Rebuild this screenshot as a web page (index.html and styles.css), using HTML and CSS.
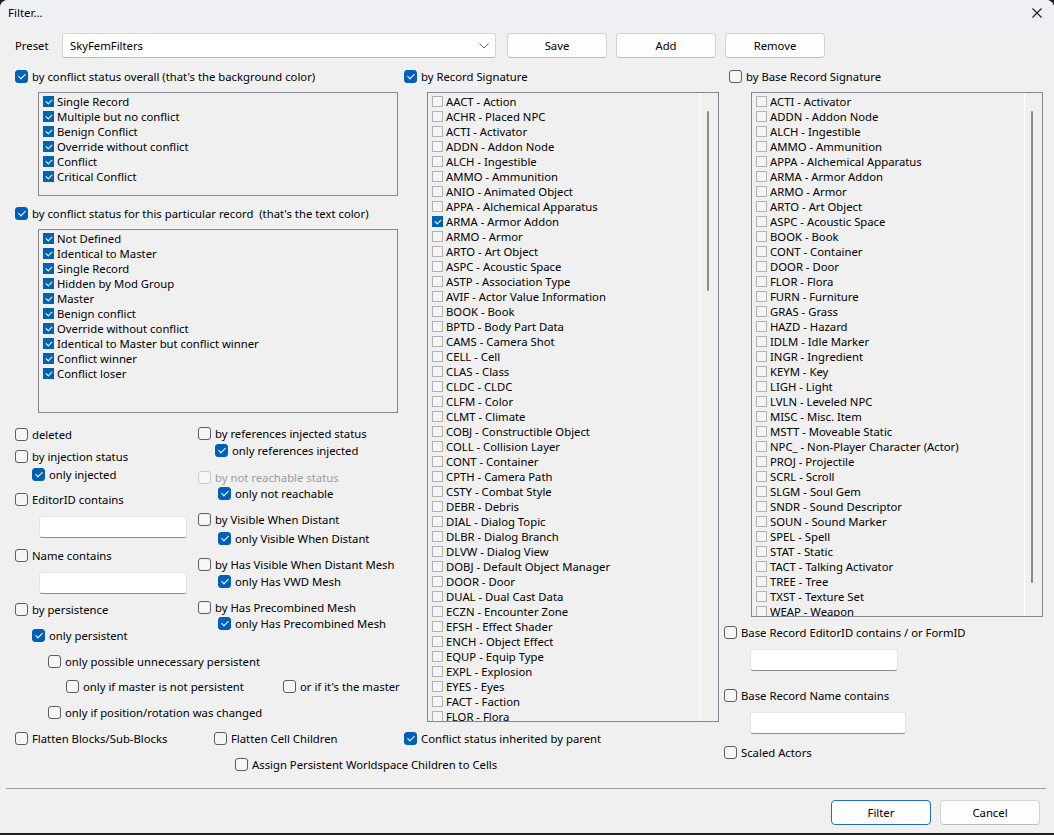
FILE: index.html
```html
<!DOCTYPE html>
<html>
<head>
  <meta charset="utf-8">
  <link rel="stylesheet" href="styles.css">
  <title>Filter...</title>
</head>
<body>
<div class="window">
  <div class="titlebar">
    <span class="title">Filter...</span>
    <span class="close">
      <svg width="10" height="10" viewBox="0 0 10 10"><path d="M0.5 0.5 L9.5 9.5 M9.5 0.5 L0.5 9.5" stroke="#1b1b1b" stroke-width="1.1" fill="none"/></svg>
    </span>
  </div>

  <div class="content">
    <div class="toprow">
      <span class="preset-label">Preset</span>
      <div class="combo">
        <span>SkyFemFilters</span>
        <svg width="10" height="6" viewBox="0 0 10 6"><path d="M0.5 0.5 L5 5 L9.5 0.5" stroke="#5f5f5f" stroke-width="1" fill="none"/></svg>
      </div>
      <button class="btn save">Save</button>
      <button class="btn">Add</button>
      <button class="btn">Remove</button>
    </div>

    <div class="main">
      <!-- column 1: conflict status + misc options -->
      <div class="col">
        <label class="cb"><span class="box on"></span>by conflict status overall (that's the background color)</label>
        <div class="listbox status-list">
          <div class="items">
            <div class="item"><span class="ibox on"></span>Single Record</div>
            <div class="item"><span class="ibox on"></span>Multiple but no conflict</div>
            <div class="item"><span class="ibox on"></span>Benign Conflict</div>
            <div class="item"><span class="ibox on"></span>Override without conflict</div>
            <div class="item"><span class="ibox on"></span>Conflict</div>
            <div class="item"><span class="ibox on"></span>Critical Conflict</div>
          </div>
        </div>

        <label class="cb mt9"><span class="box on"></span>by conflict status for this particular record &nbsp;(that's the text color)</label>
        <div class="listbox status-list tall">
          <div class="items">
            <div class="item"><span class="ibox on"></span>Not Defined</div>
            <div class="item"><span class="ibox on"></span>Identical to Master</div>
            <div class="item"><span class="ibox on"></span>Single Record</div>
            <div class="item"><span class="ibox on"></span>Hidden by Mod Group</div>
            <div class="item"><span class="ibox on"></span>Master</div>
            <div class="item"><span class="ibox on"></span>Benign conflict</div>
            <div class="item"><span class="ibox on"></span>Override without conflict</div>
            <div class="item"><span class="ibox on"></span>Identical to Master but conflict winner</div>
            <div class="item"><span class="ibox on"></span>Conflict winner</div>
            <div class="item"><span class="ibox on"></span>Conflict loser</div>
          </div>
        </div>

        <div class="lower">
          <div class="left-sub">
            <label class="cb"><span class="box"></span>deleted</label>
            <label class="cb mt6"><span class="box"></span>by injection status</label>
            <label class="cb mt2 ind17"><span class="box on"></span>only injected</label>
            <label class="cb mt9"><span class="box"></span>EditorID contains</label>
            <div class="field mt9"></div>
            <label class="cb mt9"><span class="box"></span>Name contains</label>
            <div class="field mt9"></div>
            <label class="cb mt7"><span class="box"></span>by persistence</label>
            <label class="cb mt10 ind17"><span class="box on"></span>only persistent</label>
          </div>
          <div class="right-sub">
            <label class="cb"><span class="box"></span>by references injected status</label>
            <label class="cb mt1 ind17"><span class="box on"></span>only references injected</label>
            <label class="cb mt11 disabled"><span class="box"></span>by not reachable status</label>
            <label class="cb ind20"><span class="box on"></span>only not reachable</label>
            <label class="cb mt10"><span class="box"></span>by Visible When Distant</label>
            <label class="cb mt3 ind20"><span class="box on"></span>only Visible When Distant</label>
            <label class="cb mt10"><span class="box"></span>by Has Visible When Distant Mesh</label>
            <label class="cb mt1 ind20"><span class="box on"></span>only Has VWD Mesh</label>
            <label class="cb mt10"><span class="box"></span>by Has Precombined Mesh</label>
            <label class="cb ind20"><span class="box on"></span>only Has Precombined Mesh</label>
          </div>
        </div>

        <label class="cb mt10 ind33"><span class="box"></span>only possible unnecessary persistent</label>
        <div class="pair-row master-row mt9">
          <label class="cb"><span class="box"></span>only if master is not persistent</label>
          <label class="cb"><span class="box"></span>or if it's the master</label>
        </div>
        <label class="cb mt10 ind33"><span class="box"></span>only if position/rotation was changed</label>
        <div class="pair-row flatten-row mt10">
          <label class="cb"><span class="box"></span>Flatten Blocks/Sub-Blocks</label>
          <label class="cb"><span class="box"></span>Flatten Cell Children</label>
        </div>
        <label class="cb mt10 assign"><span class="box"></span>Assign Persistent Worldspace Children to Cells</label>
      </div>

      <!-- column 2: record signatures -->
      <div class="col">
        <label class="cb"><span class="box on"></span>by Record Signature</label>
        <div class="listbox sig-list">
          <div class="items">
            <div class="item"><span class="ibox"></span>AACT - Action</div>
            <div class="item"><span class="ibox"></span>ACHR - Placed NPC</div>
            <div class="item"><span class="ibox"></span>ACTI - Activator</div>
            <div class="item"><span class="ibox"></span>ADDN - Addon Node</div>
            <div class="item"><span class="ibox"></span>ALCH - Ingestible</div>
            <div class="item"><span class="ibox"></span>AMMO - Ammunition</div>
            <div class="item"><span class="ibox"></span>ANIO - Animated Object</div>
            <div class="item"><span class="ibox"></span>APPA - Alchemical Apparatus</div>
            <div class="item"><span class="ibox on"></span>ARMA - Armor Addon</div>
            <div class="item"><span class="ibox"></span>ARMO - Armor</div>
            <div class="item"><span class="ibox"></span>ARTO - Art Object</div>
            <div class="item"><span class="ibox"></span>ASPC - Acoustic Space</div>
            <div class="item"><span class="ibox"></span>ASTP - Association Type</div>
            <div class="item"><span class="ibox"></span>AVIF - Actor Value Information</div>
            <div class="item"><span class="ibox"></span>BOOK - Book</div>
            <div class="item"><span class="ibox"></span>BPTD - Body Part Data</div>
            <div class="item"><span class="ibox"></span>CAMS - Camera Shot</div>
            <div class="item"><span class="ibox"></span>CELL - Cell</div>
            <div class="item"><span class="ibox"></span>CLAS - Class</div>
            <div class="item"><span class="ibox"></span>CLDC - CLDC</div>
            <div class="item"><span class="ibox"></span>CLFM - Color</div>
            <div class="item"><span class="ibox"></span>CLMT - Climate</div>
            <div class="item"><span class="ibox"></span>COBJ - Constructible Object</div>
            <div class="item"><span class="ibox"></span>COLL - Collision Layer</div>
            <div class="item"><span class="ibox"></span>CONT - Container</div>
            <div class="item"><span class="ibox"></span>CPTH - Camera Path</div>
            <div class="item"><span class="ibox"></span>CSTY - Combat Style</div>
            <div class="item"><span class="ibox"></span>DEBR - Debris</div>
            <div class="item"><span class="ibox"></span>DIAL - Dialog Topic</div>
            <div class="item"><span class="ibox"></span>DLBR - Dialog Branch</div>
            <div class="item"><span class="ibox"></span>DLVW - Dialog View</div>
            <div class="item"><span class="ibox"></span>DOBJ - Default Object Manager</div>
            <div class="item"><span class="ibox"></span>DOOR - Door</div>
            <div class="item"><span class="ibox"></span>DUAL - Dual Cast Data</div>
            <div class="item"><span class="ibox"></span>ECZN - Encounter Zone</div>
            <div class="item"><span class="ibox"></span>EFSH - Effect Shader</div>
            <div class="item"><span class="ibox"></span>ENCH - Object Effect</div>
            <div class="item"><span class="ibox"></span>EQUP - Equip Type</div>
            <div class="item"><span class="ibox"></span>EXPL - Explosion</div>
            <div class="item"><span class="ibox"></span>EYES - Eyes</div>
            <div class="item"><span class="ibox"></span>FACT - Faction</div>
            <div class="item"><span class="ibox"></span>FLOR - Flora</div>
          </div>
          <div class="track"><div class="thumb short"></div></div>
        </div>
        <label class="cb mt8"><span class="box on"></span>Conflict status inherited by parent</label>
      </div>

      <!-- column 3: base record signatures -->
      <div class="col">
        <label class="cb ind5"><span class="box"></span>by Base Record Signature</label>
        <div class="listbox base-list">
          <div class="items">
            <div class="item"><span class="ibox"></span>ACTI - Activator</div>
            <div class="item"><span class="ibox"></span>ADDN - Addon Node</div>
            <div class="item"><span class="ibox"></span>ALCH - Ingestible</div>
            <div class="item"><span class="ibox"></span>AMMO - Ammunition</div>
            <div class="item"><span class="ibox"></span>APPA - Alchemical Apparatus</div>
            <div class="item"><span class="ibox"></span>ARMA - Armor Addon</div>
            <div class="item"><span class="ibox"></span>ARMO - Armor</div>
            <div class="item"><span class="ibox"></span>ARTO - Art Object</div>
            <div class="item"><span class="ibox"></span>ASPC - Acoustic Space</div>
            <div class="item"><span class="ibox"></span>BOOK - Book</div>
            <div class="item"><span class="ibox"></span>CONT - Container</div>
            <div class="item"><span class="ibox"></span>DOOR - Door</div>
            <div class="item"><span class="ibox"></span>FLOR - Flora</div>
            <div class="item"><span class="ibox"></span>FURN - Furniture</div>
            <div class="item"><span class="ibox"></span>GRAS - Grass</div>
            <div class="item"><span class="ibox"></span>HAZD - Hazard</div>
            <div class="item"><span class="ibox"></span>IDLM - Idle Marker</div>
            <div class="item"><span class="ibox"></span>INGR - Ingredient</div>
            <div class="item"><span class="ibox"></span>KEYM - Key</div>
            <div class="item"><span class="ibox"></span>LIGH - Light</div>
            <div class="item"><span class="ibox"></span>LVLN - Leveled NPC</div>
            <div class="item"><span class="ibox"></span>MISC - Misc. Item</div>
            <div class="item"><span class="ibox"></span>MSTT - Moveable Static</div>
            <div class="item"><span class="ibox"></span>NPC_ - Non-Player Character (Actor)</div>
            <div class="item"><span class="ibox"></span>PROJ - Projectile</div>
            <div class="item"><span class="ibox"></span>SCRL - Scroll</div>
            <div class="item"><span class="ibox"></span>SLGM - Soul Gem</div>
            <div class="item"><span class="ibox"></span>SNDR - Sound Descriptor</div>
            <div class="item"><span class="ibox"></span>SOUN - Sound Marker</div>
            <div class="item"><span class="ibox"></span>SPEL - Spell</div>
            <div class="item"><span class="ibox"></span>STAT - Static</div>
            <div class="item"><span class="ibox"></span>TACT - Talking Activator</div>
            <div class="item"><span class="ibox"></span>TREE - Tree</div>
            <div class="item"><span class="ibox"></span>TXST - Texture Set</div>
            <div class="item"><span class="ibox"></span>WEAP - Weapon</div>
          </div>
          <div class="track"><div class="thumb long"></div></div>
        </div>
        <label class="cb mt7"><span class="box"></span>Base Record EditorID contains / or FormID</label>
        <div class="field base-field mt9"></div>
        <label class="cb mt16"><span class="box"></span>Base Record Name contains</label>
        <div class="field base-field wide mt9"></div>
        <label class="cb mt10"><span class="box"></span>Scaled Actors</label>
      </div>
    </div>

    <div class="separator"></div>
    <div class="footer">
      <button class="btn default">Filter</button>
      <button class="btn">Cancel</button>
    </div>
  </div>
</div>
</body>
</html>
```

FILE: styles.css
```css
* {
  box-sizing: border-box;
}

body {
  margin: 0;
  background-color: #1e1e1e;
  font-family: "Noto Sans", sans-serif;
  font-size: 11.3px;
  color: #000;
}

.window {
  width: 1054px;
  height: 833px;
  background-color: #f0f0f0;
  border-radius: 8px 8px 0 0;
  overflow: hidden;
}

.titlebar {
  height: 25px;
  background-color: #eff0f4;
  display: flex;
  align-items: center;
  justify-content: space-between;
  padding-left: 8px;
  font-size: 11.5px;
}

.close {
  width: 34px;
  display: flex;
  justify-content: center;
  padding-top: 1px;
}

.content {
  padding: 8px 14px 0 15px;
}

/* preset row */
.toprow {
  display: flex;
  align-items: center;
  height: 25px;
}

.preset-label {
  width: 47px;
}

.combo {
  width: 434px;
  height: 25px;
  background-color: #fff;
  border: 1px solid #d6d6d6;
  border-bottom-color: #b8b8b8;
  border-radius: 3px;
  display: flex;
  align-items: center;
  justify-content: space-between;
  padding: 0 6px 0 7px;
}

.btn {
  width: 100px;
  height: 25px;
  margin-left: 9px;
  background-color: #fdfdfd;
  border: 1px solid #d3d3d3;
  border-bottom-color: #bcbcbc;
  border-radius: 4px;
  font-family: inherit;
  font-size: 11.3px;
  color: #000;
  padding: 0;
}

.btn.save {
  margin-left: 11px;
}

.btn.default {
  border: 1px solid #1d6fc2;
  margin-left: 0;
}

/* main columns */
.main {
  display: grid;
  grid-template-columns: 389px 320px 1fr;
  margin-top: 10px;
  height: 720px;
}

.col {
  display: flex;
  flex-direction: column;
  align-items: flex-start;
}

.cb {
  display: flex;
  align-items: center;
  height: 16px;
  white-space: nowrap;
}

.box {
  width: 13px;
  height: 13px;
  flex: none;
  margin-right: 4px;
  border: 1px solid #5d5d5d;
  border-radius: 3px;
  background-color: #f6f6f6;
  position: relative;
}

.box.on {
  background-color: #005fb8;
  border-color: #005fb8;
}

.box.on::after {
  content: "";
  position: absolute;
  left: 4px;
  top: 1px;
  width: 3px;
  height: 6px;
  border: solid #fff;
  border-width: 0 1px 1px 0;
  transform: rotate(45deg);
}

.disabled {
  color: #9d9d9d;
}

.disabled .box {
  border-color: #c9c9c9;
}

/* list boxes */
.listbox {
  border: 1px solid #828790;
  background-color: #f0f0f0;
  display: flex;
  overflow: hidden;
  margin-top: 8px;
}

.items {
  flex: 1;
  padding: 1px 0 0 4px;
}

.item {
  display: flex;
  align-items: center;
  height: 15px;
  white-space: nowrap;
}

.ibox {
  width: 11px;
  height: 11px;
  flex: none;
  margin-right: 3px;
  border: 1px solid #b2b2b2;
  background-color: #f4f4f4;
  position: relative;
}

.ibox.on {
  background-color: #0063b1;
  border-color: #0063b1;
}

.ibox.on::after {
  content: "";
  position: absolute;
  left: 3px;
  top: 1px;
  width: 3px;
  height: 5px;
  border: solid #fff;
  border-width: 0 1px 1px 0;
  transform: rotate(45deg);
}

.track {
  width: 18px;
  flex: none;
  border-left: 1px solid #fff;
  padding-left: 6px;
}

.thumb {
  width: 2px;
  margin-top: 18px;
  background-color: #8b8b8b;
  border-radius: 1px;
}

.thumb.short {
  height: 180px;
}

.thumb.long {
  height: 472px;
}

.status-list {
  width: 360px;
  height: 104px;
  margin-left: 23px;
}

.status-list.tall {
  height: 184px;
}

.sig-list {
  width: 292px;
  height: 630px;
  margin-left: 23px;
}

.base-list {
  width: 292px;
  height: 525px;
  margin-left: 27px;
}

/* lower options */
.lower {
  display: flex;
  margin-top: 12px;
}

.left-sub {
  width: 183px;
  padding-top: 1px;
  display: flex;
  flex-direction: column;
  align-items: flex-start;
}

.right-sub {
  display: flex;
  flex-direction: column;
  align-items: flex-start;
}

.field {
  width: 148px;
  height: 22px;
  margin-left: 24px;
  background-color: #fff;
  border: 1px solid #e4e4e4;
  border-bottom-color: #8d8d8d;
  border-radius: 3px;
}

.base-field {
  margin-left: 26px;
}

.base-field.wide {
  width: 156px;
}

.pair-row {
  display: flex;
}

.master-row {
  margin-left: 51px;
}

.master-row .cb:first-child {
  width: 217px;
}

.flatten-row .cb:first-child {
  width: 199px;
}

.assign {
  margin-left: 220px;
}

.ind5 { margin-left: 5px; }
.ind17 { margin-left: 17px; }
.ind20 { margin-left: 20px; }
.ind33 { margin-left: 33px; }

.mt1 { margin-top: 1px; }
.mt2 { margin-top: 2px; }
.mt3 { margin-top: 3px; }
.mt6 { margin-top: 6px; }
.mt7 { margin-top: 7px; }
.mt8 { margin-top: 8px; }
.mt9 { margin-top: 9px; }
.mt10 { margin-top: 10px; }
.mt11 { margin-top: 11px; }
.mt16 { margin-top: 16px; }

/* bottom buttons */
.separator {
  height: 1px;
  background-color: #a0a0a0;
  margin: 0 -6px 0 -9px;
}

.footer {
  display: flex;
  justify-content: flex-end;
  gap: 9px;
  margin-top: 11px;
}

.footer .btn {
  margin-left: 0;
}
```
